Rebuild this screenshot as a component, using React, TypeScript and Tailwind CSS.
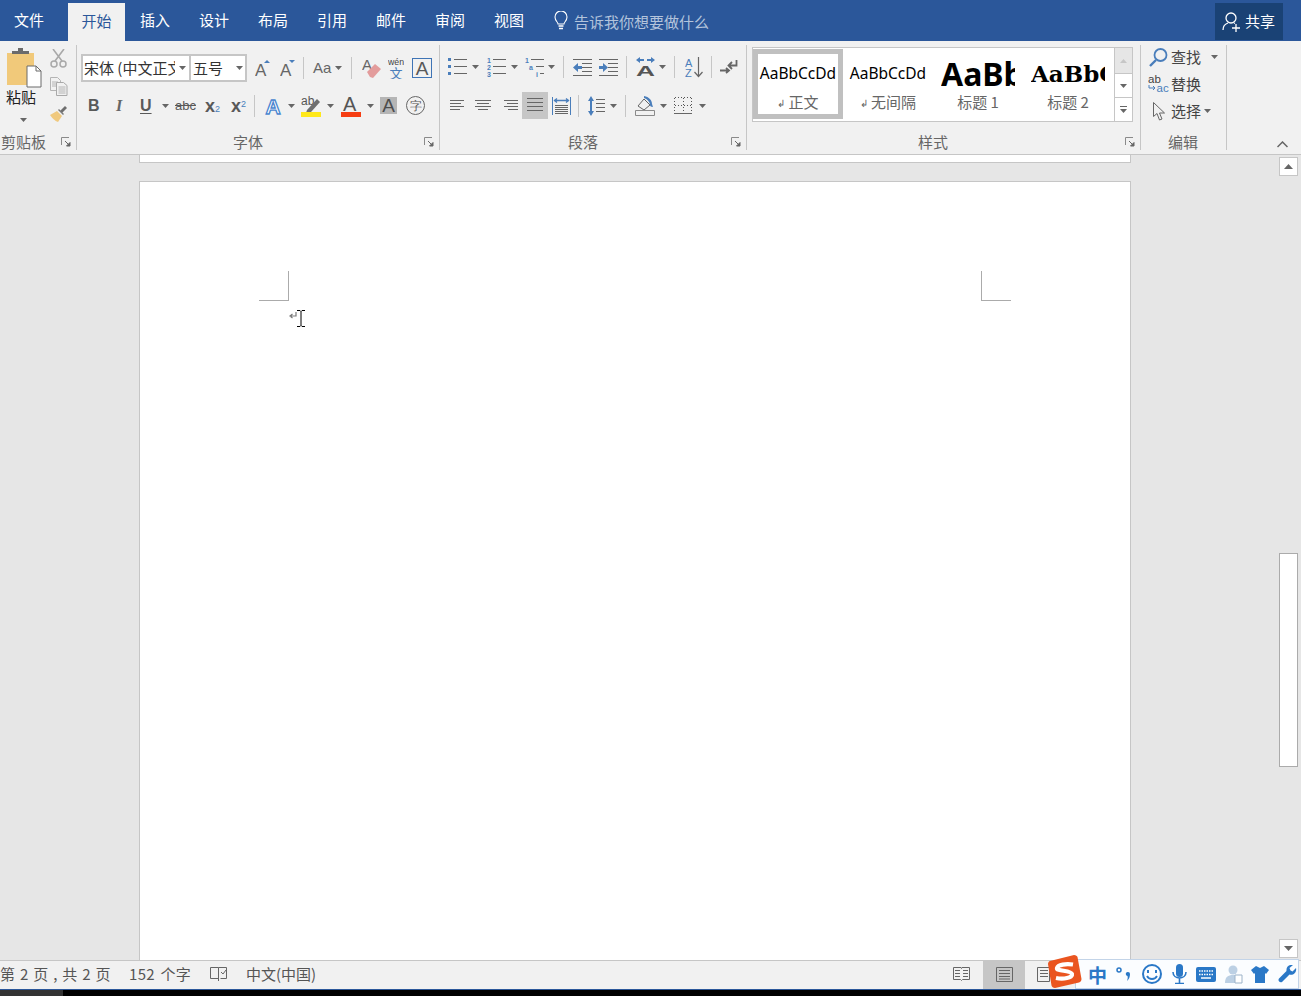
import * as React from 'react';

const CJK = '"Noto Sans CJK SC", "Noto Sans", sans-serif';
const BLUE = '#4a7ebb';
const GRAY = '#666666';

function Caret({ className = '' }: { className?: string }) {
  return (
    <svg width="7" height="4" viewBox="0 0 7 4" className={`shrink-0 ${className}`}>
      <path d="M0 0h7L3.5 4z" fill={GRAY} />
    </svg>
  );
}

function Sep({ className = '' }: { className?: string }) {
  return <div className={`w-px h-[22px] bg-[#c6c6c6] shrink-0 ${className}`} />;
}

function Launcher() {
  return (
    <svg width="10" height="10" viewBox="0 0 10 10" className="ml-auto mr-[5px] shrink-0">
      <path d="M.5 8V.5H8" fill="none" stroke="#8a8a8a" />
      <path d="M4 4l4 4M9 5.5V9H5.5z" fill={GRAY} stroke={GRAY} strokeWidth="1" />
    </svg>
  );
}

function Group({
  label,
  labelClass,
  className,
  children,
}: {
  label: string;
  labelClass: string;
  className: string;
  children: React.ReactNode;
}) {
  return (
    <div className={`h-[105px] flex flex-col border-r border-[#c6c6c6] shrink-0 ${className}`}>
      <div className="h-[89px]">{children}</div>
      <div className="h-[16px] flex items-center">
        <span className={`text-[15px] leading-[16px] text-[#666] ${labelClass}`}>{label}</span>
        {label !== '编辑' && <Launcher />}
      </div>
    </div>
  );
}

function Scissors() {
  return (
    <svg width="17" height="19" viewBox="0 0 17 19" className="shrink-0">
      <path d="M3 0l9 12M14 0L5 12" stroke="#a9a9a9" strokeWidth="1.6" fill="none" />
      <circle cx="4" cy="15" r="3" stroke="#a9a9a9" strokeWidth="1.5" fill="none" />
      <circle cx="13" cy="15" r="3" stroke="#a9a9a9" strokeWidth="1.5" fill="none" />
    </svg>
  );
}

function CopyIcon() {
  return (
    <svg width="18" height="19" viewBox="0 0 18 19" className="shrink-0">
      <path d="M.5.5h7l3 3v10H.5z" fill="#f1f1f1" stroke="#b4b4b4" />
      <path d="M2 5h6M2 7h6M2 9h6" stroke="#b4b4b4" />
      <path d="M6.5 5.5h7l3.5 3v10H6.5z" fill="#f1f1f1" stroke="#a9a9a9" />
      <path d="M8.500 10h7M8.500 12h7M8.500 14h7M8.500 16h7" stroke="#b4b4b4" />
    </svg>
  );
}

function Brush() {
  return (
    <svg width="18" height="17" viewBox="0 0 18 17" className="shrink-0">
      <path d="M10 6l5-5 2 2-5 5z" fill="#6f6f6f" />
      <path d="M9 4l5 5-1 1-5-5z" fill="#7a7a7a" />
      <path d="M7 6l5 5-4 6c-3-1-6-4-8-7z" fill="#f0c97e" />
    </svg>
  );
}

function PasteIcon() {
  return (
    <svg width="35" height="40" viewBox="0 0 35 40" className="shrink-0">
      <path d="M0 5h27v32H0z" fill="#f1c97a" />
      <path d="M5 6V3h6V0h5v3h6v3z" fill="#6b6b6b" />
      <path d="M20 18h9l5 5v16H20z" fill="#fff" stroke="#6b6b6b" strokeWidth="1" />
      <path d="M29 18v5h5" fill="none" stroke="#6b6b6b" />
    </svg>
  );
}

function GrowA({ down }: { down?: boolean }) {
  return (
    <svg width="16" height="20" viewBox="0 0 16 20" className="shrink-0">
      <text x="0" y="18" fontFamily="Liberation Sans" fontSize="17" fill={GRAY}>A</text>
      {down ? <path d="M9 2h6l-3 3z" fill={BLUE} /> : <path d="M9 5l3-3 3 3z" fill={BLUE} />}
    </svg>
  );
}

function Eraser() {
  return (
    <svg width="19" height="22" viewBox="0 0 19 22" className="shrink-0">
      <text x="0" y="13" fontFamily="Liberation Sans" fontSize="15" fill={GRAY}>A</text>
      <path d="M5 15l8-8 6 5-8 9-3-1z" fill="#e39c9c" />
    </svg>
  );
}

function Wen() {
  return (
    <svg width="16" height="22" viewBox="0 0 16 22" className="shrink-0">
      <text x="0" y="8" fontFamily="Liberation Sans" fontSize="9.500" fill="#444" textLength="16" lengthAdjust="spacingAndGlyphs">wén</text>
      <text x="1.500" y="21" fontFamily={CJK} fontSize="13" fill={BLUE}>文</text>
    </svg>
  );
}

function BoxedA() {
  return (
    <div className="w-[20px] h-[20px] border border-[#3f74b5] flex items-center justify-center text-[19px] leading-none text-[#595959] font-['Liberation_Sans'] shrink-0">
      A
    </div>
  );
}

function EffectA() {
  return (
    <svg width="18" height="22" viewBox="0 0 18 22" className="shrink-0">
      <text x="0.500" y="19" fontFamily="Liberation Sans" fontWeight="700" fontSize="21" fill="#fff" stroke="#4a86cf" strokeWidth="1.300">A</text>
    </svg>
  );
}

function Highlight() {
  return (
    <svg width="20" height="22" viewBox="0 0 20 22" className="shrink-0">
      <text x="0" y="10" fontFamily="Liberation Sans" fontSize="12" fill="#555">ab</text>
      <path d="M6 15l10-11 3 3-9 10-5 1z" fill="#6f6f6f" />
      <path d="M0 17h20v5H0z" fill="#ffe81a" />
    </svg>
  );
}

function ColorA() {
  return (
    <svg width="20" height="22" viewBox="0 0 20 22" className="shrink-0">
      <text x="2" y="16" fontFamily="Liberation Sans" fontSize="20" fill="#555">A</text>
      <path d="M0 17h20v5H0z" fill="#f63d12" />
    </svg>
  );
}

function ShadeA() {
  return (
    <div className="w-[17px] h-[17px] bg-[#b5b5b5] flex items-center justify-center text-[19px] leading-none text-[#4d4d4d] font-['Liberation_Sans'] shrink-0">
      A
    </div>
  );
}

function CircleChar() {
  return (
    <div className="w-[19px] h-[19px] rounded-full border border-[#666] flex items-center justify-center text-[12px] leading-none text-[#555] shrink-0">
      字
    </div>
  );
}

function Bullets() {
  return (
    <svg width="19" height="20" viewBox="0 0 19 20" className="shrink-0">
      <path d="M0 1h3v3H0zM0 8h3v3H0zM0 15h3v3H0z" fill={BLUE} />
      <path d="M6 2.500h13M6 9.500h13M6 16.500h13" stroke={GRAY} />
    </svg>
  );
}

function Numbers() {
  return (
    <svg width="19" height="20" viewBox="0 0 19 20" className="shrink-0">
      <g fontFamily="Liberation Sans" fontSize="7" fontWeight="700" fill={BLUE}>
        <text x="0" y="6">1</text>
        <text x="0" y="13">2</text>
        <text x="0" y="20">3</text>
      </g>
      <path d="M6 2.500h13M6 9.500h13M6 16.500h13" stroke={GRAY} />
    </svg>
  );
}

function Multilevel() {
  return (
    <svg width="19" height="20" viewBox="0 0 19 20" className="shrink-0">
      <g fontFamily="Liberation Sans" fontSize="7" fontWeight="700" fill={BLUE}>
        <text x="0" y="6">1</text>
        <text x="4" y="13">a</text>
        <text x="11" y="20">i</text>
      </g>
      <path d="M6 2.500h13M11 9.500h8M15 16.500h4" stroke={GRAY} />
    </svg>
  );
}

function IndentIcon({ flip }: { flip?: boolean }) {
  return (
    <svg width="19" height="17" viewBox="0 0 19 17" className="shrink-0">
      <path d="M0 .5h19M9 4.500h10M9 8.500h10M9 12.500h10M0 16.500h19" stroke={GRAY} />
      <path d={flip ? 'M0 7h4V4l5 4.500L4 13v-3H0z' : 'M9 7H5V4L0 8.500 5 13v-3h4z'} fill={BLUE} />
    </svg>
  );
}

function TextDir() {
  return (
    <svg width="19" height="20" viewBox="0 0 19 20" className="shrink-0">
      <path d="M0 3l4-3v2h4v2H4v2zM19 3l-4-3v2h-4v2h4v2z" fill={BLUE} />
      <text x="0" y="19" fontFamily="Liberation Sans" fontWeight="700" fontSize="15" fill="#555" textLength="19" lengthAdjust="spacingAndGlyphs">A</text>
    </svg>
  );
}

function SortIcon() {
  return (
    <svg width="18" height="21" viewBox="0 0 18 21" className="shrink-0">
      <g fontFamily="Liberation Sans" fontSize="11" fill={BLUE}>
        <text x="0" y="10">A</text>
        <text x="0" y="20">Z</text>
      </g>
      <path d="M13.500 0v19M9.500 15l4 4.500 4-4.500" fill="none" stroke={GRAY} strokeWidth="1.200" />
    </svg>
  );
}

function ShowMarks() {
  return (
    <svg width="18" height="16" viewBox="0 0 18 16" className="shrink-0">
      <path d="M16.500 1v5.500H9M12 3L8.500 6.500 12 10" fill="none" stroke={GRAY} strokeWidth="1.800" />
      <path d="M0 11.500h8M6 9l3 2.500L6 14" fill="none" stroke={GRAY} strokeWidth="1.800" />
    </svg>
  );
}

function AlignIcon({ d }: { d: string }) {
  return (
    <svg width="16" height="12" viewBox="0 0 16 12" className="shrink-0">
      <path d={d} stroke={GRAY} fill="none" />
    </svg>
  );
}

function Justify() {
  return (
    <svg width="16" height="15" viewBox="0 0 16 15" className="shrink-0">
      <path d="M0 .5h16M0 4.500h16M0 8.500h16M0 12.500h16" stroke={GRAY} />
    </svg>
  );
}

function Distribute() {
  return (
    <svg width="19" height="18" viewBox="0 0 19 18" className="shrink-0">
      <path d="M.5 0v18M18.500 0v18" stroke={BLUE} />
      <path d="M2 3.500h15M5 1.500L2.500 3.500 5 5.500M14 1.500l2.500 2L14 5.500" fill="none" stroke={BLUE} strokeWidth="1.300" />
      <path d="M3 8.500h13M3 10.500h13M3 12.500h13M3 14.500h13M3 16.500h13" stroke={GRAY} />
    </svg>
  );
}

function LineSpacing() {
  return (
    <svg width="17" height="20" viewBox="0 0 17 20" className="shrink-0">
      <path d="M3 0l3 5H4v10h2l-3 5-3-5h2V5H0z" fill={BLUE} />
      <path d="M8 3.500h9M8 7.500h9M8 11.500h9M8 15.500h9" stroke={GRAY} />
    </svg>
  );
}

function Shading() {
  return (
    <svg width="20" height="20" viewBox="0 0 20 20" className="shrink-0">
      <path d="M3 10l6-7 6 6-6 5z" fill="#f1f1f1" stroke={GRAY} />
      <path d="M9 0c5 1 8 4 8 8l1 3c-2 0-3-1-3-2 0-3-3-6-6-7z" fill={BLUE} />
      <path d="M.5 14.500h19v5H.5z" fill="#f1f1f1" stroke="#8a8a8a" />
    </svg>
  );
}

function Borders() {
  return (
    <svg width="18" height="17" viewBox="0 0 18 17" shapeRendering="crispEdges" className="shrink-0">
      <path d="M.5.5h17M17.500.5v16M.5.500v16M9.500.5v16M.5 8.500h17" fill="none" stroke="#555" strokeDasharray="1 2" />
      <path d="M0 16.500h18" stroke={GRAY} />
    </svg>
  );
}

function Magnifier() {
  return (
    <svg width="19" height="19" viewBox="0 0 19 19" className="shrink-0">
      <circle cx="11.500" cy="7" r="6" fill="none" stroke={BLUE} strokeWidth="1.800" />
      <path d="M1 18l6-6" stroke={BLUE} strokeWidth="2.400" />
    </svg>
  );
}

function ReplaceIcon() {
  return (
    <svg width="21" height="18" viewBox="0 0 21 18" className="shrink-0">
      <text x="0" y="8" fontFamily="Liberation Sans" fontSize="11.500" fill="#444">ab</text>
      <text x="8.500" y="17" fontFamily="Liberation Sans" fontSize="11.500" fill={BLUE}>ac</text>
      <path d="M1 10v3h6M5 11l2 2-2 2" fill="none" stroke={BLUE} />
    </svg>
  );
}

function Pointer() {
  return (
    <svg width="13" height="19" viewBox="0 0 13 19" className="shrink-0">
      <path d="M.5.500v14l3.500-3 2.500 6.500 2.500-1-2.500-6h5z" fill="#f1f1f1" stroke={GRAY} />
    </svg>
  );
}

function Bulb() {
  return (
    <svg width="14" height="19" viewBox="0 0 14 19" className="shrink-0">
      <path d="M4 13c0-2-3-3-3-7a6 6 0 0112 0c0 4-3 5-3 7z" fill="none" stroke="#fff" strokeWidth="1.100" />
      <path d="M4.500 15h5M5 17.500h4" stroke="#fff" strokeWidth="1.300" />
    </svg>
  );
}

function ShareIcon() {
  return (
    <svg width="20" height="20" viewBox="0 0 20 20" className="shrink-0">
      <circle cx="9" cy="6" r="5" fill="none" stroke="#fff" strokeWidth="1.300" />
      <path d="M1 18c0-4 2-6 5-7M12 11l1 .5" fill="none" stroke="#fff" strokeWidth="1.300" />
      <path d="M14 12v8M10 16h8" stroke="#fff" strokeWidth="1.300" />
    </svg>
  );
}

function Ribbon() {
  return (
    <div className="h-[114px] pt-[4px] bg-[#f1f1f1] border-b border-[#c6c6c6] flex text-[#444] shrink-0">
      <Group label="剪贴板" labelClass="ml-[1px]" className="w-[77px]">
        <div className="flex pt-[3px]">
          <div className="w-[50px] pl-[6px]">
            <div className="pl-px"><PasteIcon /></div>
            <div className="-mt-[2px] text-[15px] leading-[22px] text-[#222]">粘贴</div>
            <Caret className="ml-[14px] mt-[10px]" />
          </div>
          <div className="flex flex-col gap-[9px] pt-[1px]">
            <Scissors />
            <CopyIcon />
            <Brush />
          </div>
        </div>
      </Group>

      <Group label="字体" labelClass="ml-[156px]" className="w-[363px]">
        <div className="pt-[9px]">
          <div className="h-[28px] flex items-center">
            <div className="ml-[4px] w-[110px] h-[28px] bg-white border-2 border-[#c6c6c6] flex items-center">
              <span className="ml-px w-[91px] overflow-hidden whitespace-nowrap text-[15px] text-[#333]">宋体 (中文正文)</span>
              <Caret className="ml-[4px]" />
            </div>
            <div className="w-[56px] h-[28px] bg-white border-2 border-l-0 border-[#c6c6c6] flex items-center">
              <span className="ml-[2px] text-[15px] text-[#333]">五号</span>
              <Caret className="ml-[13px]" />
            </div>
            <div className="ml-[8px]"><GrowA /></div>
            <div className="ml-[9px]"><GrowA down /></div>
            <Sep className="ml-[7px]" />
            <span className="ml-[9px] w-[19px] text-[15px] whitespace-nowrap text-[#666] font-['Liberation_Sans']">Aa</span>
            <Caret className="ml-[3px]" />
            <Sep className="ml-[9px]" />
            <div className="ml-[10px]"><Eraser /></div>
            <div className="ml-[7px]"><Wen /></div>
            <div className="ml-[8px]"><BoxedA /></div>
          </div>
          <div className="h-[27px] mt-[10px] flex items-center text-[#595959] font-['Liberation_Sans']">
            <span className="ml-[11px] w-[10px] text-[16px] font-bold">B</span>
            <span className="ml-[18px] w-[9px] text-[16px] italic font-bold font-['Liberation_Serif'] text-[#666]">I</span>
            <span className="ml-[15px] w-[12px] text-[16px] font-bold underline underline-offset-2">U</span>
            <Caret className="ml-[10px]" />
            <span className="ml-[6px] w-[21px] text-[13px] line-through">abc</span>
            <span className="ml-[9px] w-[15px] text-[18px] font-bold leading-none whitespace-nowrap">
              x<span className="text-[9px] font-normal text-[#4a7ebb]">2</span>
            </span>
            <span className="ml-[11px] w-[16px] text-[18px] font-bold leading-none whitespace-nowrap">
              x<sup className="text-[9px] font-normal text-[#4a7ebb]">2</sup>
            </span>
            <Sep className="ml-[7px]" />
            <div className="ml-[10px]"><EffectA /></div>
            <Caret className="ml-[5px]" />
            <div className="ml-[6px]"><Highlight /></div>
            <Caret className="ml-[6px]" />
            <div className="ml-[7px]"><ColorA /></div>
            <Caret className="ml-[6px]" />
            <div className="ml-[6px]"><ShadeA /></div>
            <div className="ml-[9px]"><CircleChar /></div>
          </div>
        </div>
      </Group>

      <Group label="段落" labelClass="ml-[128px]" className="w-[307px]">
        <div className="pt-[9px]">
          <div className="h-[26px] flex items-center">
            <div className="ml-[8px]"><Bullets /></div>
            <Caret className="ml-[5px]" />
            <div className="ml-[8px]"><Numbers /></div>
            <Caret className="ml-[5px]" />
            <div className="ml-[7px]"><Multilevel /></div>
            <Caret className="ml-[4px]" />
            <Sep className="ml-[8px]" />
            <div className="ml-[9px]"><IndentIcon /></div>
            <div className="ml-[7px]"><IndentIcon flip /></div>
            <Sep className="ml-[8px]" />
            <div className="ml-[9px]"><TextDir /></div>
            <Caret className="ml-[4px]" />
            <Sep className="ml-[8px]" />
            <div className="ml-[10px]"><SortIcon /></div>
            <Sep className="ml-[8px]" />
            <div className="ml-[8px]"><ShowMarks /></div>
          </div>
          <div className="h-[27px] mt-[12px] flex items-center">
            <div className="ml-[10px]"><AlignIcon d="M0 .5h14M0 3.500h11M0 6.500h14M0 9.500h10" /></div>
            <div className="ml-[9px]"><AlignIcon d="M0 .5h16M2 3.500h12M0 6.500h16M3 9.500h10" /></div>
            <div className="ml-[11px]"><AlignIcon d="M2 .5h14M5 3.500h11M2 6.500h14M6 9.500h10" /></div>
            <div className="ml-[4px] w-[26px] h-[27px] bg-[#c6c6c6] flex items-center justify-center"><Justify /></div>
            <div className="ml-[4px]"><Distribute /></div>
            <Sep className="ml-[7px]" />
            <div className="ml-[9px]"><LineSpacing /></div>
            <Caret className="ml-[5px]" />
            <Sep className="ml-[8px]" />
            <div className="ml-[9px]"><Shading /></div>
            <Caret className="ml-[5px]" />
            <div className="ml-[7px]"><Borders /></div>
            <Caret className="ml-[7px]" />
          </div>
        </div>
      </Group>

      <Group label="样式" labelClass="ml-[171px]" className="w-[394px]">
        <div className="ml-[5px] mt-[2px] w-[381px] h-[75px] flex bg-white border border-[#c6c6c6]">
          <div className="flex pt-px">
            <div className="w-[90px] h-[70px] border-[5px] border-[#c0c0c0] flex flex-col items-center">
              <div className="h-[40px] flex items-center text-[15.500px] text-black font-['Noto_Sans']">AaBbCcDd</div>
              <div className="-mt-[1px] h-[18px] flex items-center text-[15px] text-[#666]"><span className="mr-[3px] text-[10px]">↲</span>正文</div>
            </div>
            <div className="w-[90px] h-[70px] border-[5px] border-white flex flex-col items-center">
              <div className="h-[40px] flex items-center text-[15.500px] text-black font-['Noto_Sans']">AaBbCcDd</div>
              <div className="-mt-[1px] h-[18px] flex items-center text-[15px] text-[#666]"><span className="mr-[3px] text-[10px]">↲</span>无间隔</div>
            </div>
            <div className="w-[90px] h-[70px] border-[5px] border-white flex flex-col items-center">
              <div className="h-[40px] w-[74px] overflow-hidden whitespace-nowrap flex items-center text-[32px] font-bold text-black font-['Noto_Sans']">AaBbCcDd</div>
              <div className="-mt-[1px] h-[18px] flex items-center text-[15px] text-[#666] whitespace-pre">标题 1</div>
            </div>
            <div className="w-[90px] h-[70px] border-[5px] border-white flex flex-col items-center">
              <div className="h-[40px] w-[74px] overflow-hidden whitespace-nowrap flex items-center text-[23px] font-bold text-black font-['DejaVu_Serif']">AaBbCcDd</div>
              <div className="-mt-[1px] h-[18px] flex items-center text-[15px] text-[#666] whitespace-pre">标题 2</div>
            </div>
          </div>
          <div className="ml-auto w-[18px] flex flex-col border-l border-[#c6c6c6]">
            <div className="h-[26px] bg-[#e6e6e6] border-b border-[#c6c6c6] flex items-center justify-center">
              <svg width="7" height="4" viewBox="0 0 7 4"><path d="M0 4h7L3.500 0z" fill="#c6c6c6" /></svg>
            </div>
            <div className="h-[24px] border-b border-[#c6c6c6] flex items-center justify-center"><Caret /></div>
            <div className="flex-1 flex flex-col gap-[2px] items-center justify-center">
              <div className="w-[7px] h-px bg-[#666]" />
              <Caret />
            </div>
          </div>
        </div>
      </Group>

      <Group label="编辑" labelClass="ml-[27px]" className="w-[86px]">
        <div className="flex flex-col text-[15px] text-[#444]">
          <div className="h-[24px] flex items-center">
            <div className="ml-[8px]"><Magnifier /></div>
            <span className="ml-[3px]">查找</span>
            <Caret className="ml-[10px]" />
          </div>
          <div className="h-[24px] mt-[3px] flex items-center">
            <div className="ml-[7px]"><ReplaceIcon /></div>
            <span className="ml-[2px]">替换</span>
          </div>
          <div className="h-[24px] mt-[3px] flex items-center">
            <div className="ml-[12px]"><Pointer /></div>
            <span className="ml-[5px]">选择</span>
            <Caret className="ml-[3px]" />
          </div>
        </div>
      </Group>

      <div className="flex-1 flex items-end justify-end pr-[13px] pb-[6px]">
        <svg width="11" height="7" viewBox="0 0 11 7">
          <path d="M.5 6l5-5 5 5" fill="none" stroke={GRAY} strokeWidth="1.500" />
        </svg>
      </div>
    </div>
  );
}

function Scrollbar() {
  return (
    <div className="w-[19px] mr-[3px] pt-[2px] flex flex-col shrink-0">
      <div className="h-[19px] bg-white border border-[#c6c6c6] flex items-center justify-center">
        <svg width="9" height="5" viewBox="0 0 9 5"><path d="M0 5h9L4.500 0z" fill={GRAY} /></svg>
      </div>
      <div className="mt-[377px] h-[214px] bg-white border border-[#ababab]" />
      <div className="mt-auto mb-[2px] h-[19px] bg-white border border-[#c6c6c6] flex items-center justify-center">
        <svg width="9" height="5" viewBox="0 0 9 5"><path d="M0 0h9L4.500 5z" fill={GRAY} /></svg>
      </div>
    </div>
  );
}

function StatusBar() {
  return (
    <div className="h-[30px] shrink-0 bg-[#f1f1f1] border-t border-[#c6c6c6] border-b border-b-[#2b579a] flex items-center text-[15px] text-[#555]">
      <span className="-mt-[2px] w-[109px] whitespace-pre tracking-[0.3px] [word-spacing:1px]">第 2 页 , 共 2 页</span>
      <span className="-mt-[2px] ml-[20px] w-[61px] whitespace-pre tracking-[0.3px] [word-spacing:2px]">152 个字</span>
      <svg width="18" height="16" viewBox="0 0 18 16" className="-mt-[2px] ml-[20px] shrink-0">
        <path d="M.5 1.500h8v11h-8zM8.500 1.500h8v11h-6" fill="none" stroke={GRAY} />
        <path d="M8.500 12v3M11 6l2 2 3-4" fill="none" stroke={GRAY} />
      </svg>
      <span className="-mt-[2px] ml-[18px]">中文(中国)</span>
      <div className="ml-auto mr-[249px] flex items-center">
        <svg width="17" height="14" viewBox="0 0 17 14" className="-mt-[2px] shrink-0">
          <path d="M.5.5h7.500l.5 1 .5-1h7.500v12h-7l-1 1-1-1h-7z" fill="none" stroke={GRAY} />
          <path d="M2 3.500h5M2 6.500h5M2 9.500h5M10 3.500h5M10 6.500h5M10 9.500h5" stroke={GRAY} />
        </svg>
        <div className="ml-[13px] w-[42px] h-[28px] pb-[2px] bg-[#c6c6c6] flex items-center justify-center">
          <svg width="17" height="15" viewBox="0 0 17 15">
            <path d="M.5.5h16v14H.5zM3 3.500h11M3 6.500h11M3 9.500h11M3 12h11" fill="none" stroke={GRAY} />
          </svg>
        </div>
        <svg width="15" height="15" viewBox="0 0 15 15" className="-mt-[2px] ml-[12px] shrink-0">
          <path d="M.5.5h12v14H.5zM3 3.500h8M3 6.500h8M3 9.500h8" fill="none" stroke={GRAY} />
        </svg>
      </div>
    </div>
  );
}

function SogouBar() {
  return (
    <>
      <div className="absolute left-[1075px] top-[959px] w-[224px] h-[30px] bg-[#fbfdff] border border-[#c3d4e8] flex items-center text-[#2a78c7]">
        <span className="ml-[12px] w-[20px] text-[19px] leading-none font-bold">中</span>
        <svg width="16" height="16" viewBox="0 0 16 16" className="ml-[8px] shrink-0">
          <circle cx="3" cy="4" r="2" fill="none" stroke="#2a78c7" strokeWidth="1.500" />
          <path d="M12 6a2 2 0 012 2c0 3-1 5-3 7 .5-2 1-3 .5-5a2 2 0 01.500-4z" fill="#2a78c7" />
        </svg>
        <svg width="20" height="20" viewBox="0 0 20 20" className="ml-[10px] shrink-0">
          <circle cx="10" cy="10" r="9" fill="none" stroke="#2a78c7" strokeWidth="2" />
          <path d="M6 6v3M14 6v3" stroke="#2a78c7" strokeWidth="2" />
          <path d="M5 12c2 4 8 4 10 0" fill="none" stroke="#2a78c7" strokeWidth="1.800" />
        </svg>
        <svg width="15" height="20" viewBox="0 0 15 20" className="ml-[10px] shrink-0">
          <rect x="4" y="0" width="7" height="13" rx="3.500" fill="#2a78c7" />
          <path d="M1 8c0 8 13 8 13 0M7.500 14v5M3 19.500h9" fill="none" stroke="#2a78c7" strokeWidth="1.600" />
        </svg>
        <svg width="20" height="15" viewBox="0 0 20 15" className="ml-[9px] shrink-0">
          <rect x="0" y="0" width="20" height="15" rx="2" fill="#2a78c7" />
          <path d="M3 4h14M3 7.500h14" stroke="#fff" strokeWidth="1.500" strokeDasharray="1.500 1" />
          <path d="M5 11h10" stroke="#fff" strokeWidth="1.500" />
        </svg>
        <svg width="18" height="19" viewBox="0 0 18 19" className="ml-[9px] shrink-0">
          <circle cx="8" cy="5" r="4.500" fill="#bcd0e4" />
          <path d="M0 18c0-6 3-8 8-8s8 2 8 8z" fill="#bcd0e4" />
          <path d="M10 10h7v8h-7z" fill="#fff" stroke="#9cb3c9" />
        </svg>
        <svg width="18" height="17" viewBox="0 0 18 17" className="ml-[8px] shrink-0">
          <path d="M5 0l4 2 4-2 5 4-3 4-1-1v10H4V7L3 8 0 4z" fill="#2a78c7" />
        </svg>
        <svg width="19" height="19" viewBox="0 0 19 19" className="ml-[9px] shrink-0">
          <path d="M18 3l-3.500 3.500-2-1L11.500 3 15 0c-4-1-7 2-6.500 6L1 13.500c-1.500 2 .5 4.500 3 3.500L11.500 9.500c4 1 7.500-2.500 6.500-6.500z" fill="#2a78c7" />
        </svg>
      </div>
      <svg width="35" height="35" viewBox="0 0 35 35" className="absolute left-[1047px] top-[954px]">
        <path d="M3 7l24-6c2 0 3 1 3.500 2l4 22c0 2-1 3-2.500 3.500L8 34c-2 0-3-1-3.500-2.500L1 10c0-1.500 1-3 2-3z" fill="#ea5520" />
        <path d="M26 10.500c-7-1-15 0-16 3.500s14 2 15 6-9 5.500-16 4" fill="none" stroke="#fff" strokeWidth="4.200" />
      </svg>
    </>
  );
}

export default function App() {
  return (
    <div
      className="relative w-[1301px] h-[996px] overflow-hidden bg-black flex flex-col"
      style={{ fontFamily: CJK }}
    >
      <div className="h-[41px] bg-[#2b579a] flex text-white text-[15px] shrink-0">
        <div className="w-[68px] pl-[14px] leading-[40px]">文件</div>
        <div className="mt-[3px] w-[57px] h-[38px] bg-[#f1f1f1] text-[#2b579a] text-center leading-[35px]">开始</div>
        <div className="w-[59px] text-center leading-[40px] pl-px">插入</div>
        <div className="w-[59px] text-center leading-[40px] pl-px">设计</div>
        <div className="w-[59px] text-center leading-[40px] pl-px">布局</div>
        <div className="w-[59px] text-center leading-[40px] pl-px">引用</div>
        <div className="w-[59px] text-center leading-[40px] pl-px">邮件</div>
        <div className="w-[59px] text-center leading-[40px] pl-px">审阅</div>
        <div className="w-[59px] text-center leading-[40px] pl-px">视图</div>
        <div className="ml-[16px] flex items-center"><Bulb /></div>
        <div className="ml-[6px] leading-[44px] text-[#b3c4dc]">告诉我你想要做什么</div>
        <div className="ml-auto mr-[18px] mt-[3px] w-[68px] h-[37px] bg-[#1a4275] flex items-center pl-[7px]">
          <ShareIcon />
          <span className="ml-[3px]">共享</span>
        </div>
      </div>

      <Ribbon />

      <div className="flex-1 min-h-0 bg-[#e6e6e6] flex overflow-hidden">
        <div className="flex-1 pl-[139px]">
          <div className="w-[992px] h-[8px] bg-white border border-t-0 border-[#c6c6c6]" />
          <div className="mt-[18px] w-[992px] h-[900px] bg-white border border-[#c6c6c6] pt-[89px] px-[119px]">
            <div className="flex justify-between">
              <div className="w-[30px] h-[30px] border-r border-b border-[#ababab]" />
              <div className="w-[30px] h-[30px] border-l border-b border-[#ababab]" />
            </div>
            <div className="mt-[9px] ml-[30px] flex items-start">
              <svg width="8" height="8" viewBox="0 0 8 8" className="mt-[2px] shrink-0">
                <path d="M7 0v4H2M3.500 2L1 4l2.500 2" fill="none" stroke="#7a7a7a" strokeWidth="1.200" />
              </svg>
              <svg width="8" height="17" viewBox="0 0 8 17" className="shrink-0">
                <path d="M0 .5h3l1 1 1-1h3M4 1.500v14M0 16.500h3l1-1 1 1h3" fill="none" stroke="#000" />
              </svg>
            </div>
          </div>
        </div>
        <Scrollbar />
      </div>

      <StatusBar />

      <div className="h-[6px] shrink-0 bg-black">
        <div className="w-[63px] h-full bg-[#333]" />
      </div>

      <SogouBar />
    </div>
  );
}
